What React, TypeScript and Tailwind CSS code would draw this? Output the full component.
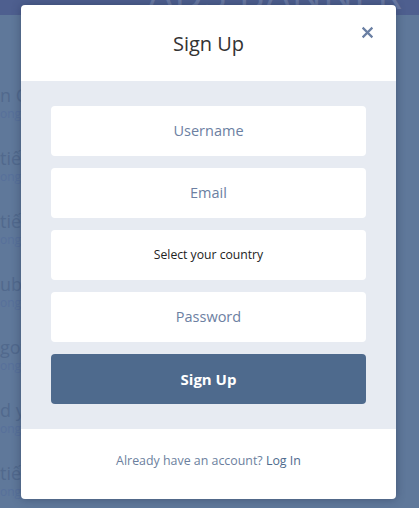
import React from "react";

const ROWS = [
  { title: "n Cách học tiếng Anh", sub: "ongSong started 15 days ago" },
  { title: "tiết bài viết", sub: "ongSong started 15 days ago" },
  { title: "tiết bài viết", sub: "ongSong started 15 days ago" },
  { title: "ublic speaking", sub: "ongSong started 15 days ago" },
  { title: "got it", sub: "ongSong started 15 days ago" },
  { title: "d your way", sub: "ongSong started 15 days ago" },
  { title: "tiết bài viết", sub: "ongSong started 15 days ago" },
];

const FIELDS = ["Username", "Email"];

export default function App() {
  return (
    <div
      className="relative w-[419px] h-[508px] overflow-hidden bg-[#5f789a]"
      style={{ fontFamily: "'Open Sans', 'Noto Sans', sans-serif" }}
    >
      {/* page behind the overlay */}
      <div className="h-[15px] bg-[#4e5f8f] overflow-hidden flex justify-end pr-4">
        <span className="text-[40px] leading-none -mt-[26px] tracking-wide text-[#6b7ba5]">
          ADS BANNER
        </span>
      </div>
      <div className="flex flex-col pt-[69px]">
        {ROWS.map((r, i) => (
          <div key={i} className="h-[63px] flex flex-col whitespace-nowrap">
            <span className="text-[18px] leading-[22px] text-[#51698d]">{r.title}</span>
            <span className="text-[12px] leading-[16px] text-[#57709a]">{r.sub}</span>
          </div>
        ))}
      </div>

      {/* modal */}
      <div className="absolute left-[21px] top-[5px] w-[375px] rounded bg-white overflow-hidden shadow-[0_0_10px_rgba(30,45,75,0.45)]">
        <div className="relative h-[76px] flex items-center justify-center">
          <h2 className="text-[20px] text-[#333] pt-[2px]">Sign Up</h2>
          <button className="absolute right-[22px] top-[21px] text-[#6a7fa3]">
            <svg width="13" height="13" viewBox="0 0 12 12" fill="none">
              <path d="M1.5 1.5L10.5 10.5M10.5 1.5L1.5 10.5" stroke="currentColor" strokeWidth="2" />
            </svg>
          </button>
        </div>

        <div className="bg-[#e7ebf2] px-[30px] py-[25px] flex flex-col gap-3">
          {FIELDS.map((f) => (
            <div
              key={f}
              className="h-[50px] rounded bg-white flex items-center justify-center text-[14.5px] text-[#6c80a2]"
            >
              {f}
            </div>
          ))}
          <div className="h-[50px] rounded bg-white flex items-center justify-center text-[12.2px] text-[#222]">
            Select your country
          </div>
          <div className="h-[50px] rounded bg-white flex items-center justify-center text-[14.5px] text-[#6c80a2]">
            Password
          </div>
          <button className="h-[50px] rounded bg-[#4e6a8d] text-white text-[15px] font-bold">
            Sign Up
          </button>
        </div>

        <div className="h-[70px] pb-[6px] flex items-center justify-center text-[12.4px] text-[#6c7f9e]">
          Already have an account?&nbsp;<span className="text-[#4e6a8d]">Log In</span>
        </div>
      </div>
    </div>
  );
}
